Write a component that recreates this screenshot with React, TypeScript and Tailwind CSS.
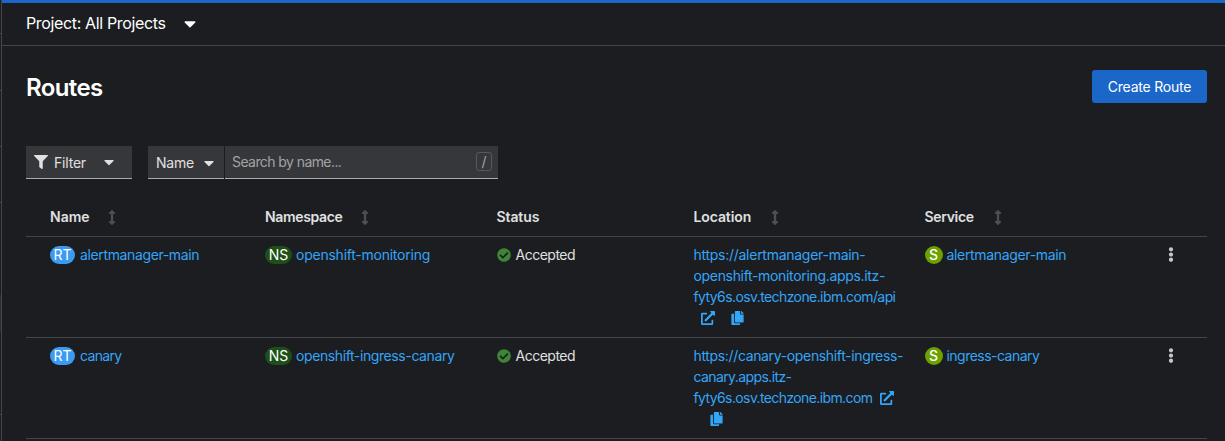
import type { ReactNode } from 'react';
import {
  FaArrowsAltV,
  FaCaretDown,
  FaCheckCircle,
  FaCopy,
  FaEllipsisV,
  FaExternalLinkAlt,
  FaFilter,
} from 'react-icons/fa';

const columns = 'grid grid-cols-[239px_231.5px_197px_231px_222.5px_48px]';

type Route = {
  name: string;
  nameClass: string;
  namespace: string;
  namespaceClass: string;
  location: { text: string; className: string }[];
  iconsInline: boolean;
  service: string;
  serviceClass: string;
};

const routes: Route[] = [
  {
    name: 'alertmanager-main',
    nameClass: 'tracking-[-0.37px]',
    namespace: 'openshift-monitoring',
    namespaceClass: 'tracking-[-0.24px]',
    location: [
      { text: 'https://alertmanager-main-', className: 'tracking-[-0.27px]' },
      { text: 'openshift-monitoring.apps.itz-', className: 'tracking-[-0.33px]' },
      { text: 'fyty6s.osv.techzone.ibm.com/api', className: 'tracking-[-0.59px]' },
    ],
    iconsInline: false,
    service: 'alertmanager-main',
    serviceClass: 'tracking-[-0.34px]',
  },
  {
    name: 'canary',
    nameClass: 'tracking-[-0.65px]',
    namespace: 'openshift-ingress-canary',
    namespaceClass: 'tracking-[-0.4px]',
    location: [
      { text: 'https://canary-openshift-ingress-', className: 'tracking-[-0.35px]' },
      { text: 'canary.apps.itz-', className: 'tracking-[-0.6px]' },
      { text: 'fyty6s.osv.techzone.ibm.com', className: 'tracking-[-0.61px]' },
    ],
    iconsInline: true,
    service: 'ingress-canary',
    serviceClass: 'tracking-[-0.52px]',
  },
];

function Badge({ children, className }: { children: ReactNode; className: string }) {
  return (
    <span
      className={`flex h-[18px] shrink-0 items-center justify-center rounded-full text-[14px] leading-[18px] text-white ${className}`}
    >
      {children}
    </span>
  );
}

function Heading({ children, className, sortable = true }: { children: ReactNode; className: string; sortable?: boolean }) {
  return (
    <div className="flex h-[39px] items-center font-semibold text-[#e0e0e0]">
      <span className={`shrink-0 pb-[2px] whitespace-nowrap ${className}`}>{children}</span>
      {sortable && <FaArrowsAltV className="h-[15px] w-[8px] shrink-0 text-[#4d4f53]" />}
    </div>
  );
}

function Row({ route }: { route: Route }) {
  return (
    <div className={`${columns} h-[101px] border-b border-[#444548] pt-[7px] leading-[21px] whitespace-nowrap text-[#35a5f7]`}>
      <div className="flex h-[21px] items-center pl-6">
        <Badge className="w-[25px] bg-[#3b9bf3]">RT</Badge>
        <a className={`ml-[5px] ${route.nameClass}`}>{route.name}</a>
      </div>
      <div className="flex h-[21px] items-center">
        <Badge className="w-[27px] bg-[#1e4f18]">NS</Badge>
        <a className={`ml-1 ${route.namespaceClass}`}>{route.namespace}</a>
      </div>
      <div className="flex h-[21px] items-center text-[#e0e0e0]">
        <FaCheckCircle className="size-[14px] text-[#3e8635]" />
        <span className="ml-[5px] tracking-[-0.5px]">Accepted</span>
      </div>
      <div>
        {route.location.map((line, i) => (
          <div key={line.text} className="flex h-[21px] items-center">
            <a className={line.className}>{line.text}</a>
            {route.iconsInline && i === 2 && <FaExternalLinkAlt className="ml-[8px] size-[14px]" />}
          </div>
        ))}
        <div className="flex h-[21px] items-center">
          {!route.iconsInline && <FaExternalLinkAlt className="ml-[7px] size-[14px]" />}
          <FaCopy className="ml-4 h-[14px] w-[13px]" />
        </div>
      </div>
      <div className="flex h-[21px] items-center">
        <Badge className="w-[18px] bg-[#6ca100] font-medium">S</Badge>
        <a className={`ml-1 ${route.serviceClass}`}>{route.service}</a>
      </div>
      <div className="flex h-[21px] items-center justify-center text-[#c7c7c7]">
        <FaEllipsisV className="h-[15px] w-[6px]" />
      </div>
    </div>
  );
}

export default function App() {
  return (
    <div className="flex h-[441px] w-[1225px] overflow-hidden bg-[#1b1d21] font-['Inter',sans-serif] text-[14px] text-[#e0e0e0]">
      <aside className="flex w-[2px] shrink-0 flex-col border-r border-[#444548]">
        <div className="h-[34px] border-b border-[#444548]" />
        <div className="h-[57px] border-b border-[#444548]" />
        <div className="h-[56px] border-b border-[#444548]" />
        <div className="h-[56px] border-b border-[#444548]" />
        <div className="h-[92px]" />
        <div className="h-[37px] bg-[#2b2d31]" />
        <div className="h-[83px] border-b border-[#444548]" />
      </aside>
      <main className="flex w-[1223px] flex-col">
        <div className="h-[3px] shrink-0 bg-[#1b66c9]" />
        <div className="flex h-[43px] shrink-0 items-center border-b border-[#444548] pb-[2px] pl-6 text-[16px] text-white">
          <span className="w-[158px] tracking-[-0.35px] whitespace-nowrap">Project: All Projects</span>
          <FaCaretDown className="h-[19px] w-[12px]" />
        </div>
        <div className="flex h-[100px] shrink-0 items-start justify-between pt-6 pr-[18px] pl-6">
          <h1 className="mt-[2px] text-[24px] leading-[32px] font-semibold tracking-[-0.6px] text-white">Routes</h1>
          <button className="h-[33px] w-[115px] rounded-[3px] bg-[#1b66c9] pb-px text-white">
            <span className="tracking-[-0.2px]">Create Route</span>
          </button>
        </div>
        <div className="flex h-[33px] shrink-0 pl-6">
          <button className="flex w-[106px] items-center border-b border-[#aaabac] bg-[#36373a] pl-2">
            <FaFilter className="size-[14px]" />
            <span className="ml-[6px] w-[50px] text-left tracking-[-0.2px]">Filter</span>
            <FaCaretDown className="h-4 w-[10px]" />
          </button>
          <button className="ml-4 flex w-[76px] items-center border-b border-[#aaabac] bg-[#36373a] pl-2">
            <span className="w-[48px] text-left tracking-[-0.25px]">Name</span>
            <FaCaretDown className="mt-px h-4 w-[10px]" />
          </button>
          <div className="ml-px flex w-[273px] items-center justify-between border-b border-[#aaabac] bg-[#36373a] pr-[6px] pl-[7px] text-[#a3a3a5]">
            <span className="pb-px tracking-[-0.58px]">Search by name...</span>
            <kbd className="mb-px flex h-[19px] w-4 items-center justify-center rounded-[3px] border border-[#57585b] font-['Inter',sans-serif] text-[14px]">
              /
            </kbd>
          </div>
        </div>
        <div className="mr-[18px] ml-6">
          <div className={`${columns} h-[58px] border-b border-[#444548] pt-[19px]`}>
            <div className="pl-6">
              <Heading className="w-[58px]">Name</Heading>
            </div>
            <Heading className="w-[96px] tracking-[-0.35px]">Namespace</Heading>
            <Heading className="tracking-[-0.1px]" sortable={false}>Status</Heading>
            <Heading className="w-[77px] tracking-[-0.1px]">Location</Heading>
            <Heading className="w-[69px] tracking-[-0.33px]">Service</Heading>
          </div>
          {routes.map((route) => (
            <Row key={route.name} route={route} />
          ))}
        </div>
      </main>
    </div>
  );
}
